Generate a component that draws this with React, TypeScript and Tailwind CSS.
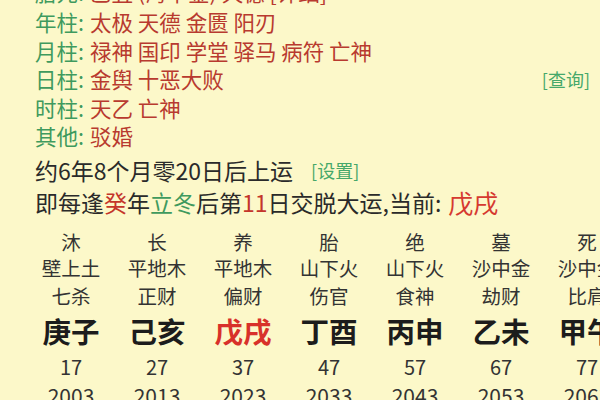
import React from "react";

const cols = [
  { a: "沐", b: "壁上土", c: "七杀", d: "庚子", e: "17", f: "2003", red: false },
  { a: "长", b: "平地木", c: "正财", d: "己亥", e: "27", f: "2013", red: false },
  { a: "养", b: "平地木", c: "偏财", d: "戊戌", e: "37", f: "2023", red: true },
  { a: "胎", b: "山下火", c: "伤官", d: "丁酉", e: "47", f: "2033", red: false },
  { a: "绝", b: "山下火", c: "食神", d: "丙申", e: "57", f: "2043", red: false },
  { a: "墓", b: "沙中金", c: "劫财", d: "乙未", e: "67", f: "2053", red: false },
  { a: "死", b: "沙中金", c: "比肩", d: "甲午", e: "77", f: "2063", red: false },
];

const rows: [string, string][] = [
  ["胎元", "乙丑 (海中金) 天德 [详细]"],
  ["年柱", "太极 天德 金匮 阳刃"],
  ["月柱", "禄神 国印 学堂 驿马 病符 亡神"],
  ["日柱", "金舆 十恶大败"],
  ["时柱", "天乙 亡神"],
  ["其他", "驳婚"],
];

export default function App() {
  return (
    <div
      className="w-[600px] h-[400px] overflow-hidden bg-[#fcf8c9] text-[#2a2a2a]"
      style={{ fontFamily: '"Noto Sans CJK SC", "Noto Sans", sans-serif' }}
    >
      <div className="-mt-[21px] pl-[35px] pr-[10px]">
        {rows.map(([k, v], i) => (
          <div
            key={k}
            className={`flex h-[28.5px] text-[21.5px] leading-none whitespace-nowrap ${i === 0 ? "items-start pt-[2px]" : "items-center"}`}
          >
            <span className="text-[#3f9a5e]">{k}:</span>
            <span className="ml-[6px] text-[#b83a2f]">{v}</span>
            {i === 3 && (
              <span className="ml-auto text-[18px] text-[#46a86a]">[查询]</span>
            )}
          </div>
        ))}
      </div>
      <div className="mt-[4px] pl-[35px] whitespace-nowrap">
        <div className="flex items-center h-[32px] text-[23px] leading-none">
          <span>约6年8个月零20日后上运</span>
          <span className="ml-[18px] text-[18px] text-[#46a86a]">[设置]</span>
        </div>
        <div className="flex items-center h-[32px] text-[23px] leading-none">
          <span>即每逢</span>
          <span className="text-[#c4352b]">癸</span>
          <span>年</span>
          <span className="text-[#3f9a5e]">立冬</span>
          <span>后第</span>
          <span className="text-[#c4352b]">11</span>
          <span>日交脱大运,当前:</span>
          <span className="ml-[7px] text-[25px] text-[#d63a30]">戊戌</span>
        </div>
      </div>
      <div className="mt-[11px] pl-[28px] flex">
        {cols.map((c) => (
          <div key={c.a} className="w-[86px] shrink-0 flex flex-col items-center whitespace-nowrap leading-none">
            <div className="h-[26px] flex items-center text-[19.5px] text-[#333]">{c.a}</div>
            <div className="h-[26px] flex items-center text-[19.5px] text-[#333]">{c.b}</div>
            <div className="h-[30px] flex items-center text-[19.5px] text-[#333]">{c.c}</div>
            <div
              className={`h-[40px] flex items-center text-[28.5px] font-bold ${c.red ? "text-[#d8312a]" : "text-[#1c1c1c]"}`}
            >
              {c.d}
            </div>
            <div className="h-[32px] flex items-center text-[20px] text-[#333]">{c.e}</div>
            <div className="h-[24px] flex items-center text-[21px] text-[#333]">{c.f}</div>
          </div>
        ))}
      </div>
    </div>
  );
}
